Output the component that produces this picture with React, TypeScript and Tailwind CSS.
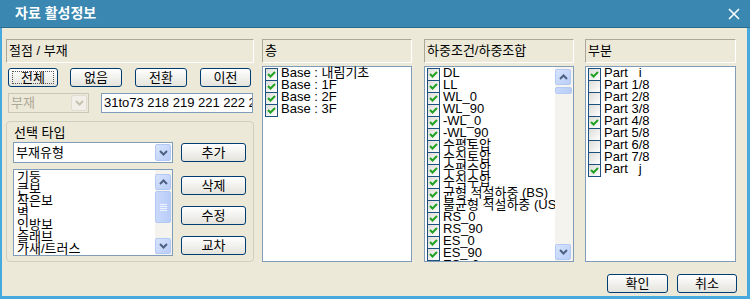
import type { ReactNode } from 'react'

const FONT = '"Liberation Sans", "Noto Sans CJK KR", sans-serif'

function Btn({ children, className = '', focused = false }: { children: ReactNode; className?: string; focused?: boolean }) {
  return (
    <div
      className={`flex items-center justify-center h-[19px] rounded-[3px] border border-[#003c74] bg-linear-to-b from-white to-[#e4e3dc] text-[13px] leading-none text-black ${className}`}
    >
      {focused ? (
        <span className="flex items-center justify-center w-[calc(100%-6px)] h-[13px] border border-dotted border-[#555]">
          {children}
        </span>
      ) : (
        children
      )}
    </div>
  )
}

function Header({ label }: { label: string }) {
  return (
    <div className="h-[24px] flex items-center pl-[2px] border border-t-[#aca899] border-l-[#aca899] border-b-white border-r-white text-[13px] text-black">
      {label}
    </div>
  )
}

function Chevron({ up = false, color = '#4d6185' }: { up?: boolean; color?: string }) {
  return (
    <svg width="9" height="6" viewBox="0 0 9 6">
      <path d={up ? 'M1 5 L4.5 1.5 L8 5' : 'M1 1 L4.5 4.5 L8 1'} fill="none" stroke={color} strokeWidth="2" />
    </svg>
  )
}

function ScrollBtn({ up = false }: { up?: boolean }) {
  return (
    <div className="h-[16px] w-[16px] shrink-0 rounded-[2px] border border-[#b4c8f6] bg-linear-to-br from-[#d8e4fd] to-[#b8cdf7] flex items-center justify-center">
      <Chevron up={up} />
    </div>
  )
}

function Check({ on }: { on: boolean }) {
  return (
    <div className="w-[13px] h-[13px] shrink-0 border border-[#1c5180] bg-linear-to-br from-[#dcdcd7] to-white flex items-center justify-center">
      {on && (
        <svg width="9" height="9" viewBox="0 0 9 9">
          <path d="M1 4 L3.5 6.5 L8 2" fill="none" stroke="#21a121" strokeWidth="2" />
        </svg>
      )}
    </div>
  )
}

function CheckRow({ label, on }: { label: string; on: boolean }) {
  return (
    <div className="h-[12px] flex items-start gap-[3px] whitespace-pre">
      <Check on={on} />
      <span className="leading-[12px] -mt-[1px]">{label}</span>
    </div>
  )
}

const loads = [
  'DL', 'LL', 'WL_0', 'WL_90', '-WL_0', '-WL_90', '수평토압', '수직토압', '수평수압', '수직수압',
  '균형 적설하중 (BS)', '불균형 적설하중 (US)', 'RS_0', 'RS_90', 'ES_0', 'ES_90', 'ES_-0',
]

const parts: [string, boolean][] = [
  ['Part   i', true], ['Part 1/8', false], ['Part 2/8', false], ['Part 3/8', false], ['Part 4/8', true],
  ['Part 5/8', false], ['Part 6/8', false], ['Part 7/8', false], ['Part   j', true],
]

export default function App() {
  return (
    <div className="w-[750px] h-[299px] flex flex-col bg-[#46aade] overflow-hidden" style={{ fontFamily: FONT }}>
      {/* Title bar */}
      <div className="h-[28px] shrink-0 flex items-center justify-between bg-[#3a88b1] border-b border-[#2b6b8e] pl-[15px] pr-[10px]">
        <span className="text-white font-bold text-[14px]">자료 활성정보</span>
        <svg width="12" height="12" viewBox="0 0 12 12">
          <path d="M1 1 L11 11 M11 1 L1 11" stroke="white" strokeWidth="1.5" />
        </svg>
      </div>

      {/* Body */}
      <div className="flex-1 ml-[2px] mr-[3px] mb-[3px] bg-[#ece9d8] flex flex-col pt-[11px] pl-[4px] pr-[10px]">
        <div className="flex h-[223px]">
          {/* Left column */}
          <div className="w-[248px] flex flex-col">
            <Header label="절점 / 부재" />
            <div className="flex mt-[5px]">
              <Btn focused className="ml-[2px] w-[50px]">전체</Btn>
              <Btn className="ml-[12px] w-[52px]">없음</Btn>
              <Btn className="ml-[13px] w-[52px]">전환</Btn>
              <Btn className="ml-[13px] w-[51px]">이전</Btn>
            </div>
            <div className="flex mt-[6px] h-[20px]">
              <div className="ml-[2px] w-[81px] flex items-center border border-[#c9c7ba] bg-[#ece9d8]">
                <span className="pl-[2px] flex-1 text-[13px] text-[#aca899]">부재</span>
                <div className="w-[16px] h-[16px] mr-[1px] rounded-[2px] border border-[#e0ded4] bg-[#f1efe7] flex items-center justify-center">
                  <Chevron color="#c5c2b2" />
                </div>
              </div>
              <div className="ml-[12px] w-[152px] border border-[#7f9db9] bg-white flex items-center pl-[2px] overflow-hidden whitespace-nowrap text-[13px]">
                31to73 218 219 221 222 233 234 235
              </div>
            </div>

            {/* Group box */}
            <div className="mt-[8px] flex-1 rounded-[4px] border border-[#d0d0bf] flex flex-col px-[6px]">
              <span className="text-[13px] leading-[13px] mt-[4px] ml-[1px]">선택 타입</span>
              <div className="flex items-center mt-[3px]">
                <div className="w-[160px] h-[21px] border border-[#7f9db9] bg-white flex items-center">
                  <span className="flex-1 pl-[2px] text-[13px]">부재유형</span>
                  <div className="w-[16px] h-[17px] mr-[1px] rounded-[2px] border border-[#b4c8f6] bg-linear-to-br from-[#d8e4fd] to-[#b8cdf7] flex items-center justify-center">
                    <Chevron />
                  </div>
                </div>
                <Btn className="ml-[8px] w-[65px]">추가</Btn>
              </div>
              <div className="flex mt-[6px]">
                <div className="w-[160px] h-[87px] border border-[#7f9db9] bg-white flex">
                  <div className="flex-1 pl-[3px] pt-[1px] text-[13px] leading-[12px] overflow-hidden">
                    {['기둥', '큰보', '작은보', '벽', '인방보', '슬래브', '가새/트러스'].map((s) => (
                      <div key={s} className="h-[12px]">{s}</div>
                    ))}
                  </div>
                  <div className="w-[17px] flex flex-col bg-[#f4f3ee] pt-[4px] pb-[1px] pr-[1px]">
                    <ScrollBtn up />
                    <div className="h-[32px] mt-[1px] rounded-[2px] border border-[#b4c8f6] bg-linear-to-r from-[#c9d8fc] to-[#b8cdf7] flex flex-col items-center justify-center gap-[1px]">
                      {[0, 1, 2, 3].map((i) => (
                        <div key={i} className="w-[7px] h-[1px] bg-[#eef4fe]" />
                      ))}
                    </div>
                    <div className="flex-1" />
                    <ScrollBtn />
                  </div>
                </div>
                <div className="flex flex-col ml-[8px] pt-[7px] gap-[11px]">
                  <Btn className="w-[65px]">삭제</Btn>
                  <Btn className="w-[65px]">수정</Btn>
                  <Btn className="w-[65px]">교차</Btn>
                </div>
              </div>
            </div>
          </div>

          {/* 층 */}
          <div className="ml-[8px] w-[150px] flex flex-col">
            <Header label="층" />
            <div className="mt-[3px] flex-1 border border-[#7f9db9] bg-white pl-[2px] pt-[1px] text-[13px]">
              {['Base : 내림기초', 'Base : 1F', 'Base : 2F', 'Base : 3F'].map((s) => (
                <CheckRow key={s} label={s} on />
              ))}
            </div>
          </div>

          {/* 하중조건/하중조합 */}
          <div className="ml-[12px] w-[150px] flex flex-col">
            <Header label="하중조건/하중조합" />
            <div className="mt-[3px] flex-1 border border-[#7f9db9] bg-white flex overflow-hidden">
              <div className="flex-1 pl-[2px] pt-[1px] text-[13px] overflow-hidden whitespace-nowrap">
                {loads.map((s) => (
                  <CheckRow key={s} label={s} on />
                ))}
              </div>
              <div className="w-[18px] flex flex-col bg-[#f4f3ee] pt-[2px] pb-[1px] pr-[1px]">
                <ScrollBtn up />
                <div className="h-[7px] mt-[2px] rounded-[2px] border border-[#b4c8f6] bg-linear-to-r from-[#c9d8fc] to-[#b8cdf7]" />
                <div className="flex-1" />
                <ScrollBtn />
              </div>
            </div>
          </div>

          {/* 부분 */}
          <div className="ml-[11px] w-[151px] flex flex-col">
            <Header label="부분" />
            <div className="mt-[3px] flex-1 border border-[#7f9db9] bg-white pl-[2px] pt-[1px] text-[13px]">
              {parts.map(([s, on]) => (
                <CheckRow key={s} label={s} on={on} />
              ))}
            </div>
          </div>
        </div>

        {/* Footer */}
        <div className="flex justify-end gap-[9px] mt-[12px]">
          <Btn className="w-[61px]">확인</Btn>
          <Btn className="w-[60px]">취소</Btn>
        </div>
      </div>
    </div>
  )
}
